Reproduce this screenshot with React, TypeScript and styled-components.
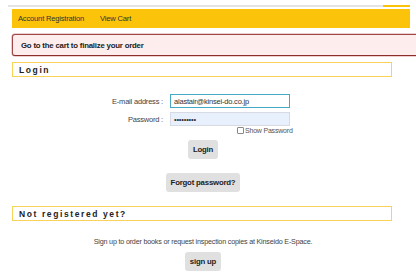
import styled, { createGlobalStyle } from 'styled-components';

const GlobalStyle = createGlobalStyle`
  body {
    margin: 0;
    background: #fff;
    font-family: 'Liberation Sans', Arial, sans-serif;
    color: #333;
    overflow: hidden;
  }
`;

const App = () => {
  return (
    <>
      <GlobalStyle />
      <Page>
        <TopStrip>
          <StripLine />
          <StripAccent />
        </TopStrip>
        <NavBar>
          <NavLink>Account Registration</NavLink>
          <NavLink>View Cart</NavLink>
        </NavBar>
        <Alert>Go to the cart to finalize your order</Alert>
        <SectionTitle>Login</SectionTitle>
        <LoginForm>
          <FieldRow>
            <FieldLabel>E-mail address :</FieldLabel>
            <TextInput $focused defaultValue="alastair@kinsei-do.co.jp" />
          </FieldRow>
          <FieldRow>
            <FieldLabel>Password :</FieldLabel>
            <TextInput $autofill type="password" defaultValue="123456789" />
          </FieldRow>
          <ShowPassword>
            <CheckBox type="checkbox" />
            Show Password
          </ShowPassword>
          <GrayButton>Login</GrayButton>
          <GrayButton $wide>Forgot password?</GrayButton>
        </LoginForm>
        <SectionTitle>Not registered yet?</SectionTitle>
        <SignUpBlock>
          <SignUpText>
            Sign up to order books or request inspection copies at Kinseido
            E-Space.
          </SignUpText>
          <GrayButton>sign up</GrayButton>
        </SignUpBlock>
      </Page>
    </>
  );
};

export default App;

const Page = styled.div`
  width: 416px;
  height: 274px;
  overflow: hidden;
  display: flex;
  flex-direction: column;
`;

const TopStrip = styled.div`
  display: flex;
  height: 2px;
  margin: 5px 6px 2px 8px;
`;

const StripLine = styled.div`
  flex: 1;
  background: #e4e4e4;
`;

const StripAccent = styled.div`
  width: 27px;
  background: #fcc30b;
`;

const NavBar = styled.div`
  display: flex;
  align-items: center;
  gap: 16px;
  height: 19px;
  margin: 0 6px 0 12px;
  padding-left: 6px;
  background: #fcc30b;
`;

const NavLink = styled.span`
  font-size: 7.6px;
  color: #333;
  letter-spacing: -0.2px;
`;

const Alert = styled.div`
  box-sizing: border-box;
  display: flex;
  align-items: center;
  width: 420px;
  height: 22px;
  margin: 6px 0 0 12px;
  padding-left: 8px;
  background: #fdeded;
  border: 1px solid #a04848;
  border-bottom-color: #8a2e2e;
  border-radius: 3px;
  box-shadow: 0 0 0 0.5px #d9a0a0;
  font-size: 7.8px;
  font-weight: bold;
  color: #222;
  letter-spacing: -0.2px;
`;

const SectionTitle = styled.div`
  box-sizing: border-box;
  display: flex;
  align-items: center;
  width: 380px;
  height: 15px;
  margin: 6px 0 0 12px;
  padding-left: 6px;
  border: 1.5px solid #f9d25a;
  font-size: 8.5px;
  font-weight: bold;
  letter-spacing: 1.6px;
  color: #222;
`;

const LoginForm = styled.div`
  display: flex;
  flex-direction: column;
  align-items: center;
  width: 406px;
  padding-top: 17px;
  padding-bottom: 8px;
`;

const FieldRow = styled.div`
  display: flex;
  align-items: center;
  gap: 7px;
  align-self: stretch;
  margin-bottom: 4px;
`;

const FieldLabel = styled.label`
  width: 163px;
  text-align: right;
  font-size: 7.5px;
  color: #444;
  letter-spacing: -0.2px;
`;

const TextInput = styled.input<{ $focused?: boolean; $autofill?: boolean }>`
  box-sizing: border-box;
  width: 120px;
  height: 14px;
  padding: 0 3px;
  font-family: 'Liberation Sans', Arial, sans-serif;
  font-size: 7.5px;
  letter-spacing: -0.2px;
  color: #333;
  outline: none;
  border: 1px solid ${(p) => (p.$focused ? '#45a9c6' : '#d6dbe3')};
  background: ${(p) => (p.$autofill ? '#e8f0fe' : '#fff')};
  border-radius: 0;
`;

const ShowPassword = styled.label`
  display: flex;
  align-items: center;
  align-self: flex-start;
  margin-left: 237px;
  margin-top: -3px;
  font-size: 7px;
  color: #555;
  letter-spacing: -0.2px;
`;

const CheckBox = styled.input`
  appearance: none;
  box-sizing: border-box;
  width: 7px;
  height: 7px;
  margin: 0 1px 0 0;
  border: 1px solid #888;
  border-radius: 1px;
  background: #fff;
`;

const GrayButton = styled.button<{ $wide?: boolean }>`
  height: 19px;
  margin-top: ${(p) => (p.$wide ? '14px' : '6px')};
  padding: 0 5px;
  border: none;
  border-radius: 3px;
  background: #e0e0e0;
  font-family: 'Liberation Sans', Arial, sans-serif;
  font-size: 7.8px;
  font-weight: bold;
  color: #222;
  letter-spacing: -0.2px;
`;

const SignUpBlock = styled.div`
  display: flex;
  flex-direction: column;
  align-items: center;
  width: 406px;
  padding-top: 16px;
`;

const SignUpText = styled.p`
  margin: 0;
  font-size: 7.2px;
  color: #444;
  letter-spacing: -0.2px;
`;
